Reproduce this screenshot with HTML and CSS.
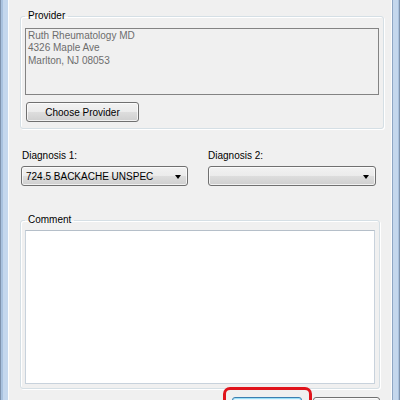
FILE: index.html
```html
<!DOCTYPE html>
<html lang="en">
<head>
    <meta charset="UTF-8">
    <meta name="viewport" content="width=device-width, initial-scale=1.0">
    <title>Referral</title>
    <link rel="stylesheet" href="styles.css">
</head>
<body>
    <div class="window">
        <div class="frame frame-left"></div>

        <div class="client">
            <!-- Provider group -->
            <fieldset class="group provider">
                <legend>Provider</legend>
                <div class="address">
                    Ruth Rheumatology MD<br>
                    4326 Maple Ave<br>
                    Marlton, NJ 08053
                </div>
                <button class="btn choose">Choose Provider</button>
            </fieldset>

            <!-- Diagnosis pickers -->
            <div class="diagnoses">
                <div class="field">
                    <label>Diagnosis 1:</label>
                    <div class="combo combo-1">
                        <span class="combo-text">724.5 BACKACHE UNSPEC</span>
                        <span class="arrow"></span>
                    </div>
                </div>
                <div class="field field-2">
                    <label>Diagnosis 2:</label>
                    <div class="combo combo-2">
                        <span class="combo-text"></span>
                        <span class="arrow"></span>
                    </div>
                </div>
            </div>

            <!-- Comment group -->
            <fieldset class="group comment">
                <legend>Comment</legend>
                <div class="memo"></div>
            </fieldset>

            <!-- Dialog buttons -->
            <div class="actions">
                <button class="btn btn-ok">OK</button>
                <button class="btn btn-cancel">Cancel</button>
            </div>
        </div>

        <div class="frame frame-right"></div>
    </div>
</body>
</html>
```

FILE: styles.css
```css
/* Basic page */
body {
    margin: 0;
    padding: 0;
    font-family: "Liberation Sans", Arial, sans-serif;
    font-size: 10px;
    color: #000;
    background-color: #f0f0f0;
    overflow: hidden;
}

.window {
    display: flex;
    height: 400px;
}

/* Window frame edges */
.frame {
    width: 9px;
    flex-shrink: 0;
}

.frame-left {
    background: linear-gradient(to right, #7f93ad 0 1px, #a9c2df 1px 3px, #c4d7ed 3px 8px, #fbfcfd 8px 9px);
}

.frame-right {
    background: linear-gradient(to right, #fbfcfd 0 1px, #8ea6c4 1px 2px, #c4d7ed 2px 7px, #a9c2df 7px 8px, #7f93ad 8px 9px);
}

/* Client area */
.client {
    flex: 1;
    padding-left: 11px;
    background-color: #f0f0f0;
}

/* Group boxes */
.group {
    box-sizing: border-box;
    margin: 0;
    padding: 6px 4px 6px 4px;
    border: 1px solid #d5dfe5;
    border-radius: 3px;
    box-shadow: inset 1px 1px 0 #fff, 1px 1px 0 #fff;
}

.group legend {
    padding: 0 3px;
    line-height: 12px;
}

.provider {
    width: 364px;
    margin-top: 10px;
}

.comment {
    width: 360px;
    margin-top: 28px;
    padding: 4px 4px 4px 4px;
}

.address {
    box-sizing: border-box;
    height: 67px;
    padding: 1px 2px;
    border: 1px solid #838383;
    color: #6d6d6d;
    line-height: 12.4px;
}

/* Buttons */
.btn {
    box-sizing: border-box;
    height: 20px;
    padding: 0;
    border: 1px solid #707070;
    border-radius: 3px;
    font-family: "Liberation Sans", Arial, sans-serif;
    font-size: 10px;
    color: #000;
    background: linear-gradient(to bottom, #f2f2f2 0%, #ebebeb 50%, #dddddd 51%, #cfcfcf 100%);
    box-shadow: inset 0 0 0 1px rgba(255, 255, 255, 0.7);
}

.choose {
    display: block;
    width: 113px;
    margin: 7px 0 0 1px;
}

/* Diagnosis row */
.diagnoses {
    display: flex;
    gap: 20px;
    margin-top: 21px;
    padding-left: 1px;
}

.field label {
    display: block;
    padding-left: 1px;
    line-height: 12px;
    margin-bottom: 4px;
}

.field-2 label {
    padding-left: 0;
}

.combo {
    box-sizing: border-box;
    display: flex;
    align-items: center;
    justify-content: space-between;
    height: 20px;
    padding: 0 6px 0 4px;
    border: 1px solid #707070;
    border-radius: 3px;
    background: linear-gradient(to bottom, #f2f2f2 0%, #ebebeb 50%, #dddddd 51%, #cfcfcf 100%);
    box-shadow: inset 0 0 0 1px rgba(255, 255, 255, 0.7);
}

.combo-1 {
    width: 167px;
}

.combo-2 {
    width: 168px;
}

.arrow {
    width: 0;
    height: 0;
    border-left: 3.5px solid transparent;
    border-right: 3.5px solid transparent;
    border-top: 4px solid #000;
    margin-top: 1px;
}

/* Comment box */
.memo {
    box-sizing: border-box;
    height: 154px;
    background-color: #fff;
    border: 1px solid #c8d2dc;
    border-top-color: #b5bfc9;
}

/* Bottom buttons */
.actions {
    display: flex;
    justify-content: flex-end;
    gap: 11px;
    margin-top: 8px;
    padding-right: 11px;
}

.actions .btn {
    height: 23px;
}

.btn-ok {
    position: relative;
    width: 70px;
    border-color: #3c7fb1;
    background: linear-gradient(to bottom, #eaf6fd 0%, #d9f0fc 50%, #bee6fd 51%, #a7d9f5 100%);
    box-shadow: inset 0 0 0 1px #9be0f7;
}

/* red annotation ring */
.btn-ok::after {
    content: "";
    position: absolute;
    left: -10px;
    top: -11px;
    right: -11px;
    bottom: -12px;
    border: 3px solid #e0141c;
    border-radius: 7px;
}

.btn-cancel {
    width: 67px;
}
```
